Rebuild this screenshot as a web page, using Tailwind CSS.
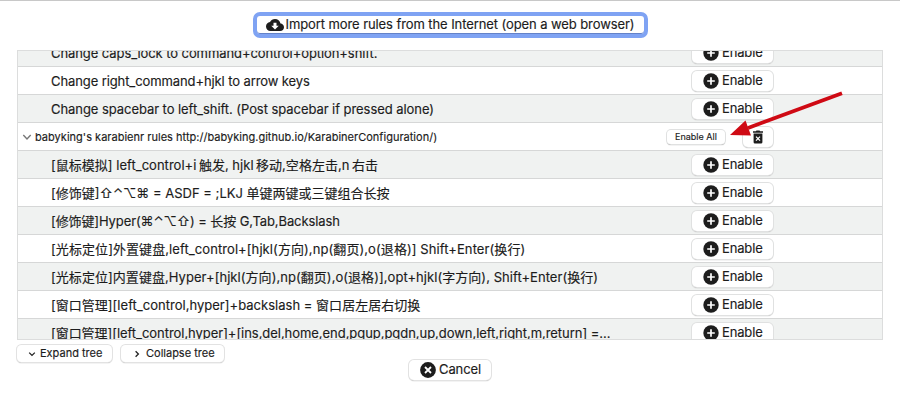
<!DOCTYPE html>
<html lang="en">
<head>
<meta charset="utf-8">
<title>Import rules</title>
<script src="https://cdn.jsdelivr.net/npm/@tailwindcss/browser@4"></script>
</head>
<body class="relative h-[400px] w-[900px] overflow-hidden bg-white font-['Inter','Noto_Sans_CJK_SC','DejaVu_Sans',sans-serif] text-[13px] text-[#1c1c1c] [-webkit-text-stroke:0.15px_#1c1c1c]">
<svg class="hidden">
  <symbol id="plus" viewBox="0 0 16 16"><circle cx="8" cy="8" r="7.7" fill="#1d1d1d"/><path d="M8 4.2v7.6M4.2 8h7.6" stroke="#fff" stroke-width="1.7"/></symbol>
</svg>
<div class="flex h-full flex-col border-t border-[#c8c8c8]">
  <div class="flex h-[49px] shrink-0 justify-center pt-[11px]">
    <button class="flex h-[26px] w-[395px] items-center rounded-[7px] border-4 border-[#7fa3f3] bg-white pl-[9px] shadow-[inset_0_-1px_0_#6482c8]">
      <svg class="h-[18px] w-[18px] shrink-0" viewBox="0 0 24 24"><path fill="#1d1d1d" d="M19.35 10.04C18.67 6.59 15.64 4 12 4 9.11 4 6.6 5.64 5.35 8.04 2.34 8.36 0 10.91 0 14c0 3.310 2.690 6 6 6h13c2.760 0 5-2.240 5-5 0-2.640-2.050-4.780-4.650-4.960zM17 13l-5 5-5-5h3V9h4v4h3z"/></svg>
      <span class="ml-[2px] whitespace-nowrap tracking-[-0.09px]">Import more rules from the Internet (open a web browser)</span>
    </button>
  </div>
  <main class="ml-[17px] h-[290px] w-[866px] shrink-0 overflow-hidden border border-[#dcdddd]">
    <div id="rows" class="-mt-[12px]"></div>
  </main>
  <div class="flex h-[60px] shrink-0">
    <div class="flex gap-[9px] pl-[17px] pt-[5px] text-[11px]">
      <button class="flex h-[17px] w-[95px] items-center rounded-[4.500px] bg-white pl-[11px] shadow-[0_0_0_1px_#e2e2e2,0_1px_1px_#888]">
        <svg class="mr-[4px] h-[8px] w-[8px]" viewBox="0 0 8 8"><path d="M1.200 2.600 4 5.400 6.800 2.600" fill="none" stroke="#222" stroke-width="1.300"/></svg><span class="whitespace-nowrap">Expand tree</span>
      </button>
      <button class="flex h-[17px] w-[103px] items-center rounded-[4.500px] bg-white pl-[12px] shadow-[0_0_0_1px_#e2e2e2,0_1px_1px_#888]">
        <svg class="mr-[5px] h-[8px] w-[8px]" viewBox="0 0 8 8"><path d="M2.600 1.200 5.400 4 2.600 6.800" fill="none" stroke="#222" stroke-width="1.300"/></svg><span class="whitespace-nowrap">Collapse tree</span>
      </button>
    </div>
    <button class="ml-[185px] mt-[20px] flex h-[20px] w-[82px] items-center rounded-[5px] bg-white pl-[11px] shadow-[0_0_0_1px_#e2e2e2,0_1px_1px_#888]">
      <svg class="h-[16px] w-[16px]" viewBox="0 0 16 16"><circle cx="8" cy="8" r="7.900" fill="#1d1d1d"/><path d="M5 5l6 6M11 5l-6 6" stroke="#fff" stroke-width="1.800"/></svg>
      <span class="ml-[3px] tracking-[-0.1px]">Cancel</span>
    </button>
  </div>
</div>
<svg class="pointer-events-none absolute left-[720px] top-[80px] h-[70px] w-[140px]" viewBox="720 80 140 70"><path d="M842 93.200 748 128" stroke="#cf0a14" stroke-width="3.800"/><path d="M730 135 745.500 120.500 751 135.500Z" fill="#cf0a14"/></svg>
<script>
const rows = [
  ['Change caps_lock to command+control+option+shift.', 'tracking-[-0.08px]'],
  ['Change right_command+hjkl to arrow keys', 'tracking-[-0.1px]'],
  ['Change spacebar to left_shift. (Post spacebar if pressed alone)', 'tracking-[-0.06px]'],
  null,
  ['[鼠标模拟] left_control+i<span class="ml-[2.5px]">触发, hjkl</span><span class="ml-[2.5px]">移动,空格左击,n</span><span class="ml-[2.5px]">右击</span>', 'tracking-[0.02px]'],
  ['[修饰键]⇧⌃⌥⌘ = ASDF = ;LKJ 单键两键或三键组合长按', ''],
  ['[修饰键]Hyper(⌘⌃⌥⇧) = 长按 G,Tab,Backslash', 'tracking-[-0.1px]'],
  ['[光标定位]外置键盘,left_control+[hjkl(方向),np(翻页),o(退格)] Shift+Enter(换行)', 'tracking-[0.08px]'],
  ['[光标定位]内置键盘,Hyper+[hjkl(方向),np(翻页),o(退格)],opt+hjkl(字方向), Shift+Enter(换行)', 'tracking-[0.05px]'],
  ['[窗口管理][left_control,hyper]+backslash = 窗口居左居右切换', 'tracking-[0.02px]'],
  ['[窗口管理][left_control,hyper]+[ins,del,home,end,pgup,pgdn,up,down,left,right,m,return] =...', 'tracking-[-0.045px]']
];
const btn = 'flex items-center bg-white shadow-[0_0_0_1px_#e0e1e1,0_1px_1px_#888]';
document.getElementById('rows').innerHTML = rows.map((r, i) => r
  ? `<div class="flex h-[28px] items-center border-b border-[#d6d7d7] ${i % 2 ? 'bg-white' : 'bg-[#f0f2f1]'}">
      <div class="w-[674px] shrink-0 whitespace-nowrap pl-[33px] leading-[20px]"><span class="${r[1]}">${r[0]}</span></div>
      <button class="${btn} h-[20px] w-[81px] rounded-[5px] pl-[11px]"><svg class="h-[16px] w-[16px] shrink-0"><use href="#plus"/></svg><span class="ml-[3px] tracking-[-0.15px]">Enable</span></button>
    </div>`
  : `<div class="flex h-[28px] items-center border-b border-[#d6d7d7] bg-white text-[11px]">
      <svg class="ml-[4px] mr-[3px] h-[10px] w-[10px]" viewBox="0 0 10 10"><path d="M1.300 3 5 6.900 8.700 3" fill="none" stroke="#777" stroke-width="1.400"/></svg>
      <div class="w-[632px] whitespace-nowrap pt-px"><span class="tracking-[0.015px]">babyking's karabienr rules http://babyking.github.io/KarabinerConfiguration/)</span></div>
      <button class="${btn} h-[14px] w-[58px] justify-center rounded-[4px] text-[9px]">Enable All</button>
      <button class="${btn} ml-[18px] h-[20px] w-[30px] justify-center rounded-[5px]"><svg class="h-[14px] w-[12px]" viewBox="0 0 12 14"><path d="M1 1.300h2.800L4.500.4h3l.7.9H11v1.500H1zM1.600 3.600h8.800v8.600q0 1.400-1.400 1.400H3q-1.400 0-1.400-1.400z" fill="#1d1d1d"/><path d="m4 6.600 4 4m0-4-4 4" stroke="#fff" stroke-width="1.300"/></svg></button>
    </div>`).join('');
</script>
</body>
</html>
